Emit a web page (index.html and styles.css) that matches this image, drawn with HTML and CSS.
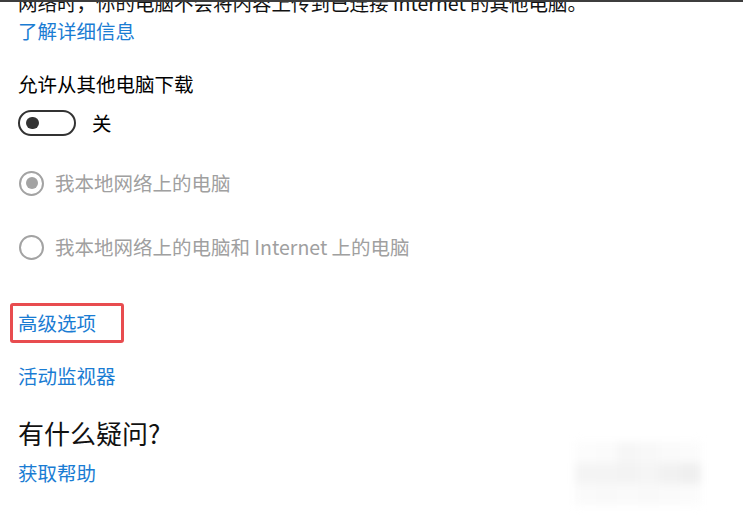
FILE: index.html
```html
<!DOCTYPE html>
<html lang="zh-CN">
<head>
<meta charset="utf-8">
<title>传递优化</title>
<link rel="stylesheet" href="styles.css">
</head>
<body>
<div class="topbar"></div>
<main class="page">
  <p class="desc">网络时，你的电脑不会将内容上传到已连接 Internet 的其他电脑。</p>
  <a class="link first-link" href="#">了解详细信息</a>

  <h2 class="setting-title">允许从其他电脑下载</h2>
  <div class="toggle-row">
    <span class="toggle"><span class="knob"></span></span>
    <span class="toggle-label">关</span>
  </div>

  <div class="radio-row r1">
    <span class="radio checked"></span>
    <span class="radio-label">我本地网络上的电脑</span>
  </div>
  <div class="radio-row r2">
    <span class="radio"></span>
    <span class="radio-label">我本地网络上的电脑和 Internet 上的电脑</span>
  </div>

  <div class="highlight"><a class="link" href="#">高级选项</a></div>
  <a class="link monitor" href="#">活动监视器</a>

  <h2 class="question">有什么疑问?</h2>
  <a class="link help" href="#">获取帮助</a>
</main>
<div class="watermark">
  <span style="background:#fcfcfc"></span><span style="background:#fbfbfb"></span><span style="background:#f6f6f6"></span><span style="background:#f8f8f8"></span><span style="background:#fafafa"></span><span style="background:#fbfbfb"></span>
  <span style="background:#f4f4f4"></span><span style="background:#f4f4f4"></span><span style="background:#f3f3f3"></span><span style="background:#f5f5f5"></span><span style="background:#f1f1f1"></span><span style="background:#efefef"></span>
  <span style="background:#fafafa"></span><span style="background:#f9f9f9"></span><span style="background:#fafafa"></span><span style="background:#f9f9f9"></span><span style="background:#fafafa"></span><span style="background:#fbfbfb"></span>
</div>
</body>
</html>
```
FILE: styles.css
```css
html, body {
  margin: 0;
  padding: 0;
  background: #ffffff;
}
body {
  font-family: "Noto Sans CJK SC", "Microsoft YaHei", sans-serif;
  font-size: 19.5px;
  line-height: 28px;
  color: #000;
  width: 743px;
  height: 515px;
  overflow: hidden;
  position: relative;
}
.topbar {
  height: 2px;
  background: #3d3d3d;
}
.page {
  overflow: hidden;
  height: 513px;
  padding-left: 18px;
  display: flex;
  flex-direction: column;
  align-items: flex-start;
}
.desc {
  margin: -13px 0 0 0;
  white-space: nowrap;
  color: #111;
}
.link {
  color: #1a7cd3;
  text-decoration: none;
  display: block;
}
.first-link { margin-top: 0; }
.setting-title {
  margin: 25px 0 0 0;
  font-size: 19.5px;
  font-weight: normal;
  line-height: 28px;
}
.toggle-row {
  margin-top: 11px;
  height: 28px;
  display: flex;
  align-items: center;
}
.toggle {
  box-sizing: border-box;
  width: 58px;
  height: 26px;
  border: 2.5px solid #333;
  border-radius: 13px;
  display: flex;
  align-items: center;
  padding-left: 6px;
}
.knob {
  width: 12.5px;
  height: 12.5px;
  border-radius: 50%;
  background: #333;
}
.toggle-label {
  margin-left: 16px;
}
.radio-row {
  height: 28px;
  display: flex;
  align-items: center;
  color: #a0a0a0;
}
.r1 { margin-top: 32px; }
.r2 { margin-top: 36px; }
.radio {
  box-sizing: border-box;
  width: 25px;
  height: 25px;
  margin-left: 1px;
  border: 2.5px solid #a3a3a3;
  border-radius: 50%;
  display: flex;
  align-items: center;
  justify-content: center;
}
.radio.checked::after {
  content: "";
  width: 12px;
  height: 12px;
  border-radius: 50%;
  background: #a3a3a3;
}
.radio-label {
  margin-left: 11px;
  white-space: nowrap;
}
.highlight {
  margin: 42px 0 0 -8px;
  border: 3px solid #e84c4f;
  border-radius: 3px;
  padding: 3px 25px 3px 5px;
}
.monitor { margin-top: 19px; }
.question {
  margin: 26px 0 0 0;
  font-size: 26px;
  line-height: 34px;
  font-weight: normal;
  color: #111;
}
.help { margin-top: 9px; }
.watermark {
  position: absolute;
  left: 575px;
  top: 442px;
  width: 130px;
  display: grid;
  grid-template-columns: repeat(6, 21px);
  grid-auto-rows: 21px;
  filter: blur(4px);
}
.watermark span { display: block; }
```
